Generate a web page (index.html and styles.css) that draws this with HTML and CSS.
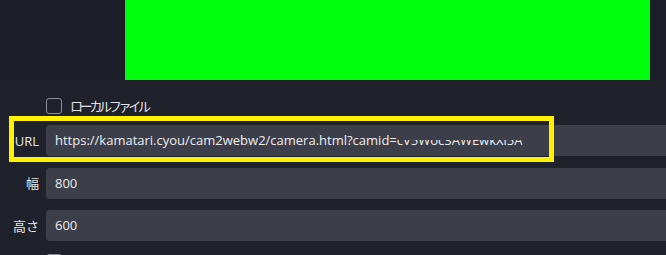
FILE: index.html
```html
<!DOCTYPE html>
<html lang="ja">
<head>
<meta charset="utf-8">
<title>ブラウザソースのプロパティ</title>
<link rel="stylesheet" href="styles.css">
</head>
<body>
<div class="app">
  <div class="preview">
    <div class="screen"></div>
  </div>
  <div class="props">
    <label class="check">
      <span class="box"></span>
      <span class="check-label">ローカルファイル</span>
    </label>
    <div class="rows">
      <div class="row">
        <span class="label">URL</span>
        <div class="field">https://kamatari.cyou/cam2webw2/camera.html?camid=<span class="clipped">cV5Woc3AWEwkXi5A</span></div>
      </div>
      <div class="row">
        <span class="label">幅</span>
        <div class="field">800</div>
      </div>
      <div class="row">
        <span class="label">高さ</span>
        <div class="field">600</div>
      </div>
    </div>
    <div class="check check-next">
      <span class="box"></span>
    </div>
    <div class="highlight"></div>
  </div>
</div>
</body>
</html>
```

FILE: styles.css
```css
html, body {
  margin: 0;
  padding: 0;
  background: #1f212b;
  overflow: hidden;
}

.app {
  width: 666px;
  height: 255px;
  overflow: hidden;
  font-family: "Open Sans", "Noto Sans CJK JP", sans-serif;
  font-size: 13px;
  color: #e6e6e8;
}

.preview {
  height: 80px;
  background: #1b1e28;
  padding-left: 125px;
}

.screen {
  width: 525px;
  height: 80px;
  background: #00ff0c;
}

.props {
  position: relative;
  background: #1f212b;
  padding-top: 18px;
  margin-right: -30px;
}

.check {
  display: flex;
  align-items: center;
  gap: 8px;
  margin-left: 46px;
  height: 16px;
}

.box {
  box-sizing: border-box;
  width: 16px;
  height: 16px;
  border: 1.5px solid #8b8d94;
  border-radius: 3px;
}

.check-label {
  font-family: "Noto Sans CJK JP", sans-serif;
  font-size: 13px;
  letter-spacing: -3.3px;
  color: #e2e2e4;
  line-height: 16px;
}

.rows {
  display: flex;
  flex-direction: column;
  gap: 11.5px;
  margin-top: 11px;
}

.row {
  display: grid;
  grid-template-columns: 39px 1fr;
  column-gap: 7px;
  align-items: center;
}

.label {
  text-align: right;
  font-family: "Open Sans", "Noto Sans CJK JP", sans-serif;
  color: #e4e4e6;
  line-height: 16px;
}

.field {
  height: 31px;
  line-height: 31px;
  background: #3c3f4a;
  border-radius: 4px;
  padding-left: 9px;
  color: #ececee;
  white-space: nowrap;
  overflow: hidden;
}

.clipped {
  clip-path: inset(50% 0 0 0);
}

.check-next {
  margin-top: 13px;
}

.highlight {
  position: absolute;
  left: 9px;
  top: 36px;
  width: 535px;
  height: 36px;
  border: 5px solid #fff000;
}
```
